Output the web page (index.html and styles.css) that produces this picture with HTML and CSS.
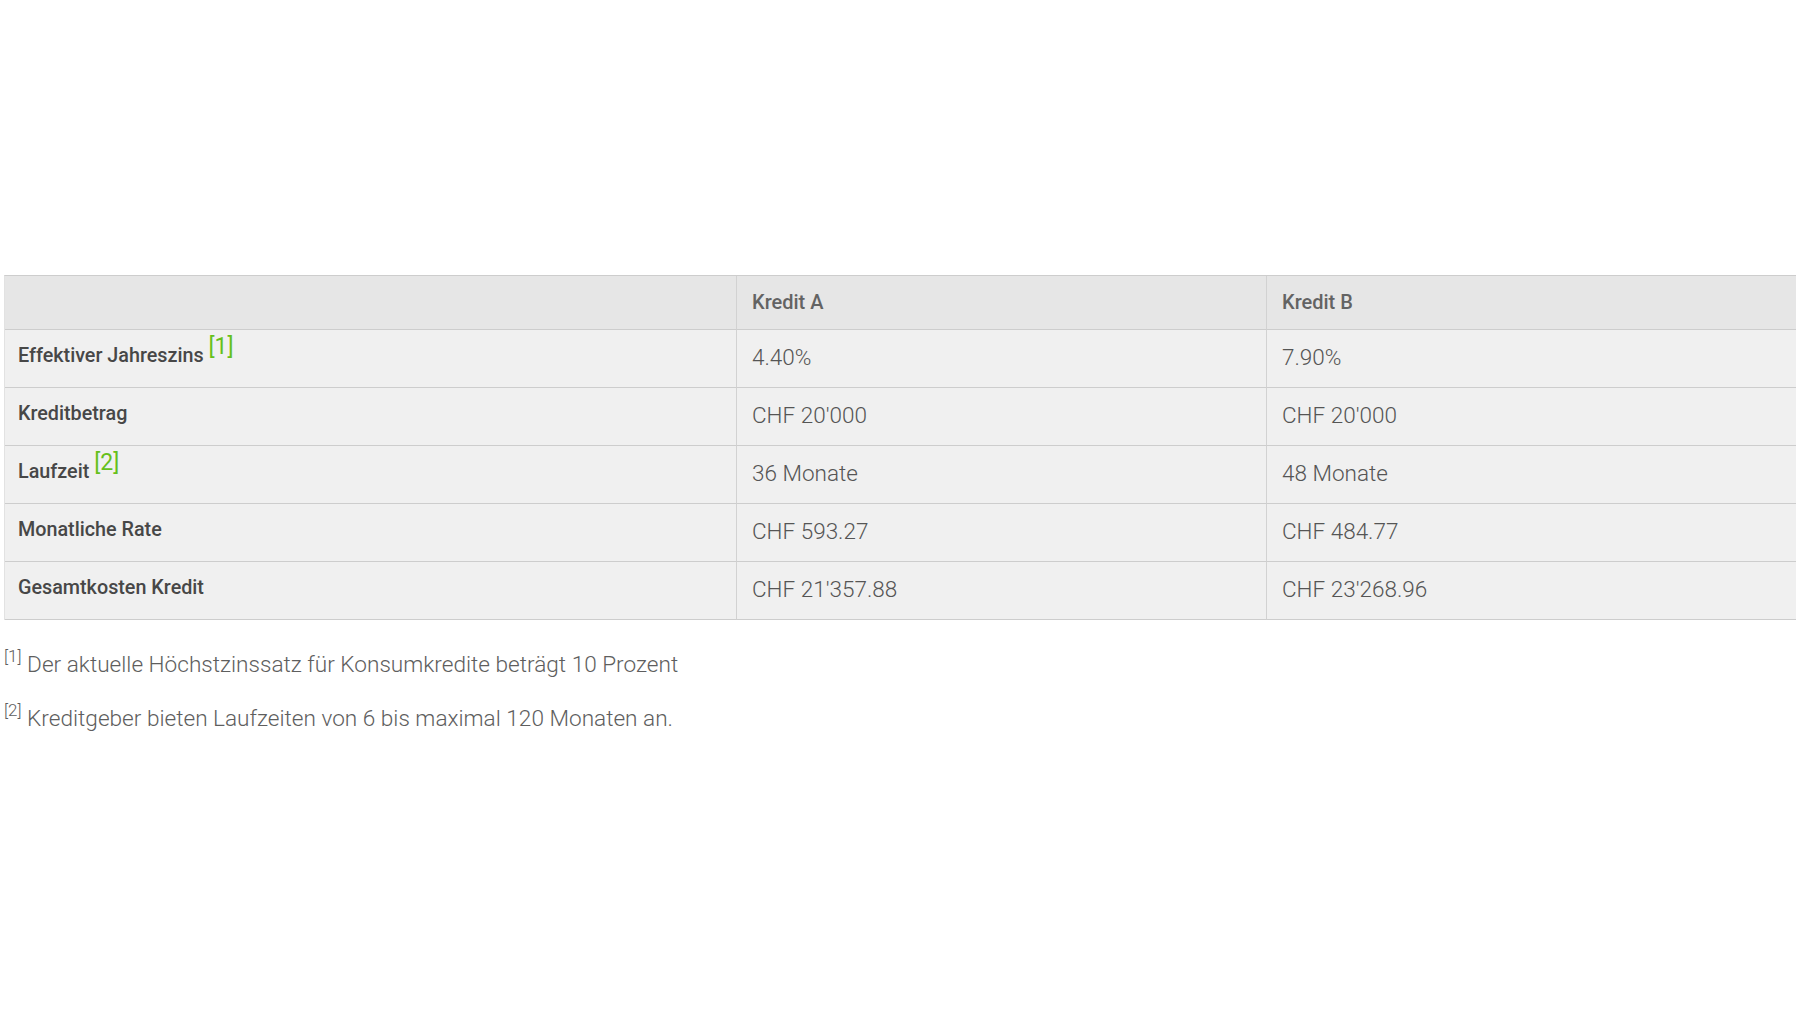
FILE: index.html
```html
<!DOCTYPE html>
<html lang="de">
<head>
<meta charset="utf-8">
<title>Kreditvergleich</title>
<link rel="stylesheet" href="styles.css">
</head>
<body>
<main class="page">
  <table class="compare">
    <colgroup>
      <col class="col-label">
      <col class="col-a">
      <col class="col-b">
    </colgroup>
    <thead>
      <tr>
        <th class="head head-empty"></th>
        <th class="head">Kredit A</th>
        <th class="head">Kredit B</th>
      </tr>
    </thead>
    <tbody>
      <tr>
        <th class="label">Effektiver Jahreszins <sup class="ref">[1]</sup></th>
        <td class="value">4.40%</td>
        <td class="value">7.90%</td>
      </tr>
      <tr>
        <th class="label">Kreditbetrag</th>
        <td class="value">CHF 20'000</td>
        <td class="value">CHF 20'000</td>
      </tr>
      <tr>
        <th class="label">Laufzeit <sup class="ref">[2]</sup></th>
        <td class="value">36 Monate</td>
        <td class="value">48 Monate</td>
      </tr>
      <tr>
        <th class="label">Monatliche Rate</th>
        <td class="value">CHF 593.27</td>
        <td class="value">CHF 484.77</td>
      </tr>
      <tr>
        <th class="label">Gesamtkosten Kredit</th>
        <td class="value">CHF 21'357.88</td>
        <td class="value">CHF 23'268.96</td>
      </tr>
    </tbody>
  </table>
  <div class="notes">
    <p class="note"><sup class="note-ref">[1]</sup> Der aktuelle Höchstzinssatz für Konsumkredite beträgt 10 Prozent</p>
    <p class="note"><sup class="note-ref">[2]</sup> Kreditgeber bieten Laufzeiten von 6 bis maximal 120 Monaten an.</p>
  </div>
</main>
</body>
</html>
```

FILE: styles.css
```css
html, body {
  margin: 0;
  padding: 0;
  background: #ffffff;
}

body {
  font-family: Roboto, "Liberation Sans", Arial, sans-serif;
  color: #555555;
}

.page {
  padding: 275px 0 0 4px;
}

.compare {
  table-layout: fixed;
  width: 1791px;
  border-collapse: separate;
  border-spacing: 0;
  border-top: 1px solid #cdcdcd;
  border-left: 1px solid #e2e2e2;
}

.col-label { width: 731px; }
.col-a { width: 530px; }
.col-b { width: 530px; }

.compare th,
.compare td {
  text-align: left;
  vertical-align: top;
  line-height: 24px;
  border-bottom: 1px solid #cdcdcd;
  padding-left: 15px;
  padding-right: 15px;
  white-space: nowrap;
}

.compare th + th,
.compare th + td,
.compare td + td {
  border-left: 1px solid #d2d2d2;
}

.head {
  background: #e6e6e6;
  font-size: 20px;
  font-weight: 500;
  color: #636363;
  padding-top: 14px;
  padding-bottom: 15px;
}

.compare .label {
  background: #f0f0f0;
  font-size: 19.75px;
  font-weight: 500;
  color: #474747;
  padding-top: 14px;
  padding-bottom: 19px;
  padding-left: 13px;
}

.compare .head-empty {
  padding-left: 13px;
}

.value {
  background: #f0f0f0;
  font-size: 22.5px;
  font-weight: 300;
  color: #555555;
  padding-top: 15px;
  padding-bottom: 18px;
}

.ref {
  font-size: 23px;
  font-weight: 400;
  color: #66c01c;
  line-height: 0;
  vertical-align: 8px;
}

.notes {
  padding-top: 28px;
}

.note {
  margin: 0 0 21px 0;
  font-size: 22.6px;
  font-weight: 300;
  line-height: 33px;
  color: #5e5e5e;
}

.note-ref {
  font-size: 17px;
  line-height: 0;
  vertical-align: 10px;
}
```
